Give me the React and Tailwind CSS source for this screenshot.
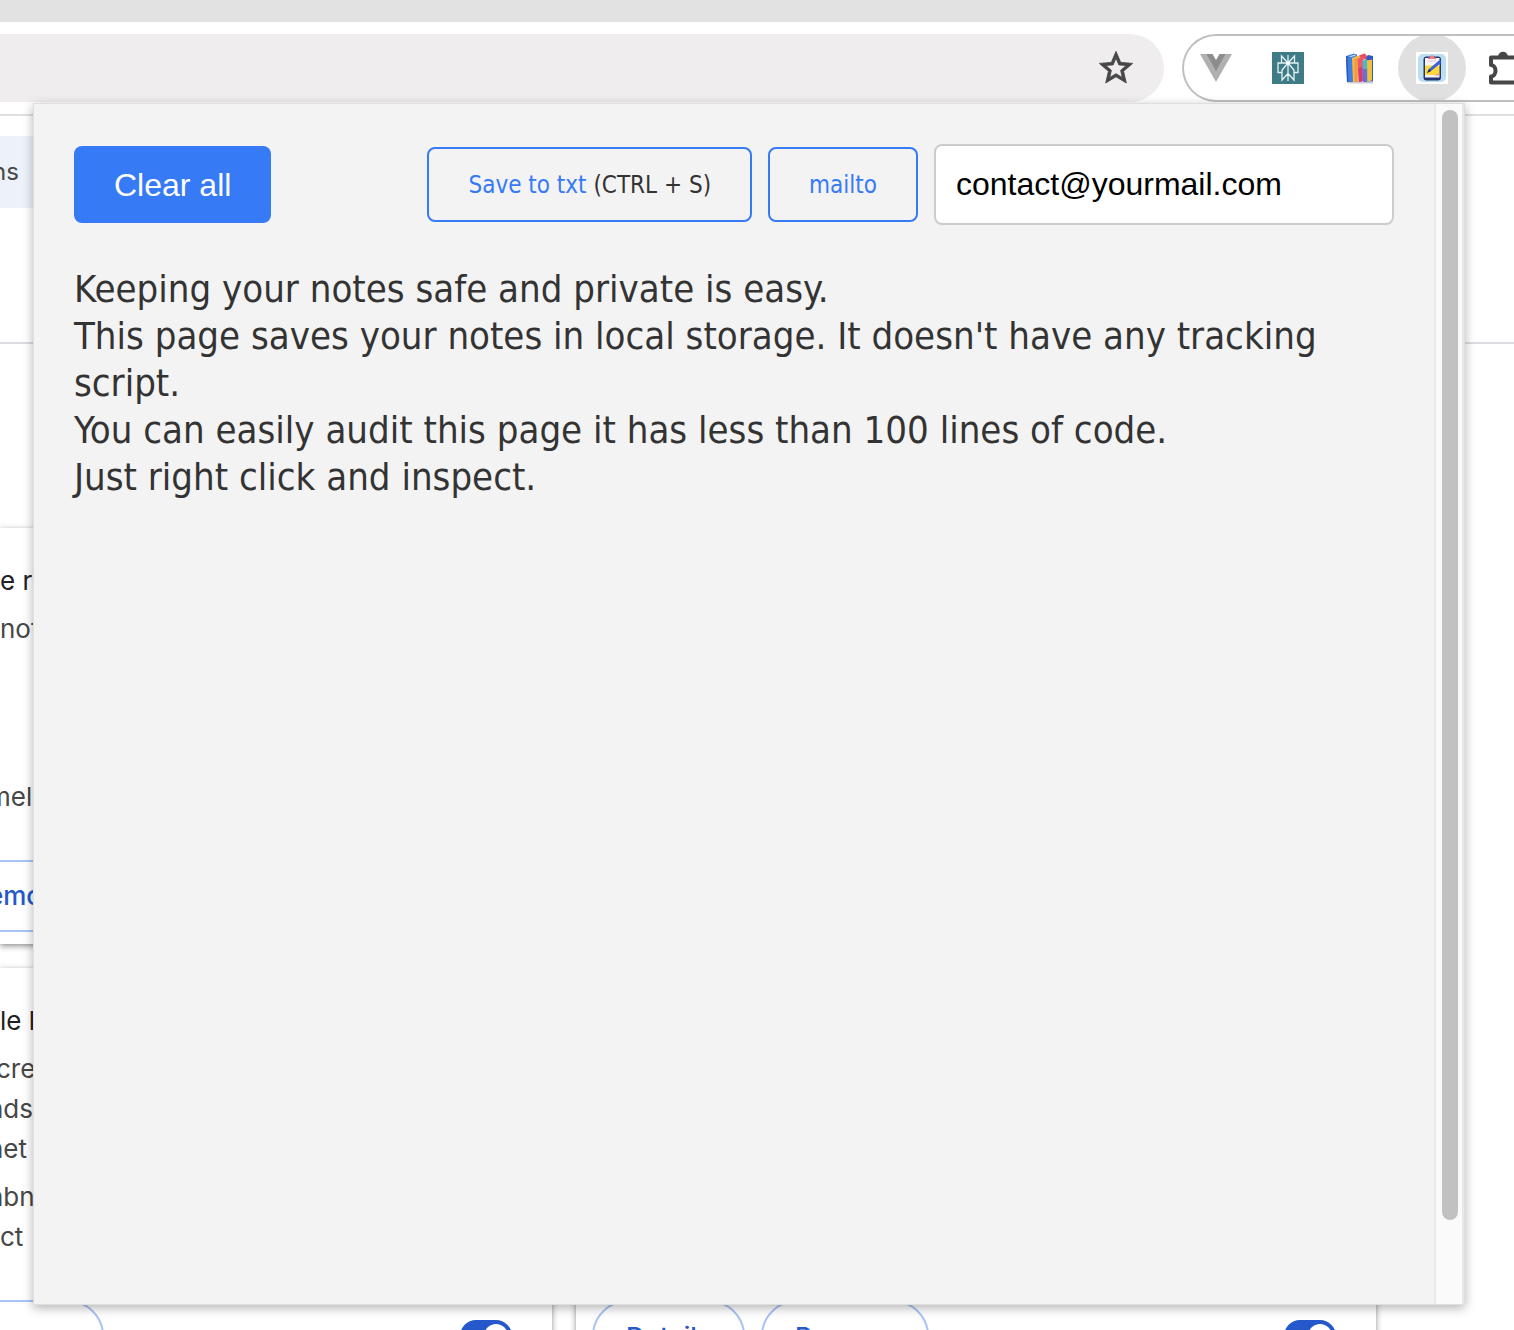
import React from "react";

const body = "font-['DejaVu_Sans_Condensed','DejaVu_Sans',sans-serif]";

function StarIcon() {
  return (
    <svg viewBox="0 0 24 24" className="size-10" fill="#474747" stroke="#474747" strokeWidth="0.5">
      <path d="M22 9.24l-7.19-.62L12 2 9.19 8.63 2 9.24l5.46 4.73L5.82 21 12 17.27 18.18 21l-1.63-7.03L22 9.24zM12 15.4l-3.76 2.27 1-4.28-3.32-2.88 4.38-.38L12 6.1l1.71 4.04 4.38.38-3.32 2.88 1 4.28L12 15.4z" />
    </svg>
  );
}

function VueIcon() {
  return (
    <svg viewBox="0 0 32 32" className="size-8">
      <path d="M0 2h32L16 30z" fill="#b0b0b0" />
      <path d="M6.400 2h19.200L16 19z" fill="#8c8c8c" />
      <path d="M12.500 2h7L16 8z" fill="#fff" />
    </svg>
  );
}

function BurstIcon() {
  return (
    <svg viewBox="0 0 32 32" className="size-8">
      <rect width="32" height="32" fill="#3e7b87" />
      <g fill="none" stroke="#e4f2f2" strokeWidth="1.300">
        <path d="M16 3v26M16 11L9.500 4v7M16 11l6.500-7v7M9.500 11H6v9.500h4M22.500 11H26v9.500h-4M9.500 11h13M16 11l-6 7v10l6-6.500M16 11l6 7v10l-6-6.500" />
      </g>
      <circle cx="16" cy="11" r="1.800" fill="#fff" />
    </svg>
  );
}

function BooksIcon() {
  return (
    <svg viewBox="0 0 32 32" className="size-8">
      <path d="M3 30h26v1.500H4z" fill="#c9cbd6" />
      <path d="M24 3l5 1v25.500h-7V5z" fill="#2c58c8" />
      <path d="M2 4l8-2.500 3 1V30H3z" fill="#3f7fe0" />
      <path d="M2 4h1.500l1 26H3z" fill="#2a59bd" />
      <path d="M5 4.500l6-2 1 .800-5 1.800z" fill="#cfe2fb" />
      <path d="M12 5l8-3.500 2.500 1.500v4l-8 1z" fill="#e64a5c" />
      <path d="M8 6l6-2.500 3 1.500-3 2v23H9z" fill="#f6b84a" />
      <path d="M10.500 7l3-1v24h-3z" fill="#f39a3f" />
      <path d="M13.500 7l6-2.500 2 2-2.500 1.500v21l-4.500 1z" fill="#ee5a6a" />
      <path d="M14.500 16l4-1v14.500l-3.500.500z" fill="#d63a74" />
      <path d="M18.500 9l3.500-2 2 1.500v21.500h-5z" fill="#4fb7c4" />
      <path d="M18.800 17h4.200v13h-4z" fill="#6a6fd0" />
      <path d="M23 8.500l5-1V28.500l-4.500 1z" fill="#f4bf3d" />
    </svg>
  );
}

function NotesIcon() {
  return (
    <svg viewBox="0 0 32 32" className="size-8">
      <rect width="32" height="32" fill="#fff" />
      <rect x="2" y="2" width="28" height="28" rx="5" fill="#b9dff0" />
      <rect x="7.500" y="4.500" width="17.500" height="24" rx="3" fill="#27356f" />
      <path d="M9 6h14.500v8H9z" fill="#f7f5f8" />
      <path d="M9 13.500h14.500V23H9z" fill="#ffd83c" />
      <path d="M9 23h14.500v2.500H9z" fill="#eef2fa" />
      <path d="M18 23.500l5.500-2v2z" fill="#f08a9a" />
      <path d="M12 7v-1.500h2c0-3 4-3 4 0h2V7z" fill="#ef7d85" />
      <path d="M12 9h8" stroke="#f3b9c0" strokeWidth="1.200" />
      <path d="M11 21l2-4L23.500 8l2 2.500L15 19z" fill="#3d5fd6" />
      <path d="M11 21l2-4 2 2z" fill="#1e2a55" />
    </svg>
  );
}

function PuzzleIcon() {
  return (
    <svg viewBox="0 0 32 36" className="h-9 w-8 shrink-0">
      <path d="M10 6.500C10.500 0 19.500 0 20 6.500z" fill="#474747" />
      <path d="M32 7.500H3v7.500c6 .500 6 11 0 11.500v6h29" fill="none" stroke="#474747" strokeWidth="4" strokeLinejoin="round" />
    </svg>
  );
}

function Toggle({ label }) {
  return (
    <label className="relative block h-8 w-[52px] rounded-full bg-[#2558cb]">
      <input type="checkbox" defaultChecked aria-label={label} className="absolute inset-0 size-full appearance-none rounded-full" />
      <span className="pointer-events-none absolute right-1 top-1 size-6 rounded-full bg-white" />
    </label>
  );
}

const btn = "h-[75px] rounded-lg border-2 border-[#367af6] px-[39px] text-2xl whitespace-nowrap text-[#367af6]";
const pill = "h-[72px] shrink-0 rounded-full border-2 border-[#a9c3f7] text-[26px] font-medium text-[#2558cb]";
const card = "h-[416px] bg-white shadow-[0_2px_6px_rgba(0,0,0,0.45)]";

export default function App() {
  return (
    <div className="relative flex h-screen flex-col overflow-hidden bg-white font-[Inter,sans-serif] text-[#474747]">
      <div className="h-[22px] shrink-0 bg-[#e2e2e2]" />
      <header className="flex h-[94px] shrink-0 items-start gap-[18px] border-b-2 border-[#e0e0e0] pt-3">
        <div className="flex h-[68px] flex-1 items-center justify-end rounded-r-full bg-[#efedee] pr-7">
          <button aria-label="Bookmark this tab"><StarIcon /></button>
        </div>
        <nav className="flex h-[68px] w-[332px] items-center overflow-hidden rounded-l-full border-2 border-r-0 border-[#c0c0c0] pl-4">
          <button aria-label="Vue" className="mr-10"><VueIcon /></button>
          <button aria-label="Search assistant" className="mr-10"><BurstIcon /></button>
          <button aria-label="Books" className="mr-[22px]"><BooksIcon /></button>
          <button aria-label="Notes" className="mr-[22px] flex size-[68px] shrink-0 items-center justify-center rounded-full bg-black/12"><NotesIcon /></button>
          <button aria-label="Extensions" className="shrink-0"><PuzzleIcon /></button>
        </nav>
      </header>

      <main className="flex-1 pt-5">
        <div className="flex h-[72px] w-60 items-center bg-[#edf1fa] text-2xl"><span className="-ml-2">ns</span></div>
        <div className="mt-[134px] border-b-2 border-[#dcdce2]" />
        <div className="mt-[184px] flex gap-6">
          <div className="flex w-[552px] flex-col gap-6">
            <section className={card + " pt-[33px] text-[26px] leading-[40px]"}>
              <h2 className="text-[#202124]">e r</h2>
              <p className="mt-2">not</p>
              <p className="mt-32 -ml-3">mel</p>
              <button className={pill + " mt-[43px] -ml-20 w-[180px] pl-[66px] text-left"}>emo</button>
            </section>
            <section className={card + " pt-[33px] text-[26px] leading-[40px]"}>
              <h2 className="text-[#202124]">le l</h2>
              <p className="mt-2 -ml-1">cre</p>
              <p className="-ml-3">nds</p>
              <p className="-ml-3">net</p>
              <p className="mt-2 -ml-3">nbn</p>
              <p>ct</p>
              <div className="mt-[43px] flex items-center justify-between pr-10">
                <button aria-label="Remove" className={pill + " -ml-16 w-[168px]"} />
                <Toggle label="Enable extension" />
              </div>
            </section>
          </div>
          <div className="mr-[138px] flex flex-1 flex-col gap-6">
            <section className={card} />
            <section className={card + " flex items-end pb-3 pl-4 pr-10"}>
              <div className="flex flex-1 items-center gap-4">
                <button className={pill + " px-8"}>Details</button>
                <button className={pill + " px-8"}>Remove</button>
                <div className="ml-auto"><Toggle label="Enable second extension" /></div>
              </div>
            </section>
          </div>
        </div>
      </main>

      <div className={"absolute top-[103px] right-[49px] bottom-[25px] left-[33px] flex border border-[#dfdfdf] bg-[#f3f3f3] text-[#333] shadow-[0_3px_10px_rgba(0,0,0,0.3)] " + body}>
        <div className="flex-1 px-10 pt-10">
          <div className="flex items-center gap-4">
            <button className="h-[77px] rounded-lg bg-[#367af6] px-10 font-['Liberation_Sans',Arial,sans-serif] text-[32px] text-white">Clear all</button>
            <button className={btn + " ml-auto"}>Save to txt <span className="text-[#333]">(CTRL + S)</span></button>
            <button className={btn}>mailto</button>
            <input aria-label="Email address" defaultValue="contact@yourmail.com" className="h-[81px] w-[460px] rounded-lg border-2 border-[#ccc] bg-white px-5 font-['Liberation_Sans',Arial,sans-serif] text-[32px] text-black" />
          </div>
          <div className="mt-[41px] text-[38px] leading-[47px]">
            <p>Keeping your notes safe and private is easy.</p>
            <p>This page saves your notes in local storage. It doesn't have any tracking script.</p>
            <p>You can easily audit this page it has less than 100 lines of code.</p>
            <p>Just right click and inspect.</p>
          </div>
        </div>
        <div className="w-[30px] border-x-2 border-[#e8e8e8] bg-[#fafafa] pt-[6px] pr-1 pb-[84px] pl-[6px]">
          <div className="h-full rounded-full bg-[#c1c1c1]" />
        </div>
      </div>
    </div>
  );
}
